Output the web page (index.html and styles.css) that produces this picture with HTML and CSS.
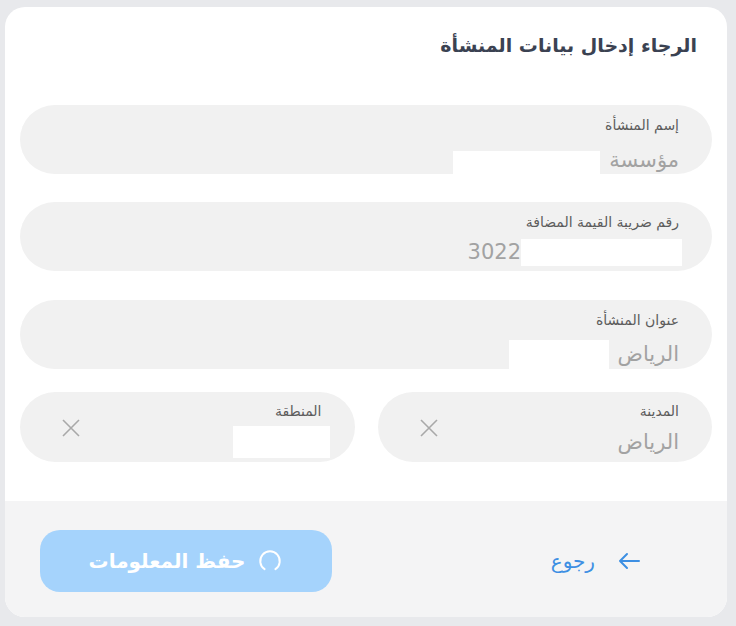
FILE: index.html
```html
<!DOCTYPE html>
<html lang="ar" dir="rtl">
<head>
    <meta charset="UTF-8">
    <meta name="viewport" content="width=device-width, initial-scale=1.0">
    <title>بيانات المنشأة</title>
    <link rel="stylesheet" href="styles.css">
</head>
<body>
    <div class="card">
        <div class="card-body">
            <h1 class="title">الرجاء إدخال بيانات المنشأة</h1>
            <div class="fields">
                <div class="field">
                    <label class="label">إسم المنشأة</label>
                    <div class="value">مؤسسة <span class="mask mask-name"></span></div>
                </div>
                <div class="field">
                    <label class="label">رقم ضريبة القيمة المضافة</label>
                    <div class="value value-ltr">3022<span class="mask mask-vat"></span></div>
                </div>
                <div class="field field-address">
                    <label class="label">عنوان المنشأة</label>
                    <div class="value">الرياض <span class="mask mask-address"></span></div>
                </div>
                <div class="row">
                    <div class="field field-select">
                        <div class="select-text">
                            <label class="label">المدينة</label>
                            <div class="value">الرياض</div>
                        </div>
                        <svg class="clear" width="20" height="20" viewBox="0 0 20 20"><path d="M2 2 L18 18 M18 2 L2 18" stroke="#a9a9a9" stroke-width="1.6" fill="none"/></svg>
                    </div>
                    <div class="field field-select">
                        <div class="select-text">
                            <label class="label">المنطقة</label>
                            <div class="value"><span class="mask mask-region"></span></div>
                        </div>
                        <svg class="clear" width="20" height="20" viewBox="0 0 20 20"><path d="M2 2 L18 18 M18 2 L2 18" stroke="#a9a9a9" stroke-width="1.6" fill="none"/></svg>
                    </div>
                </div>
            </div>
        </div>
        <div class="card-footer">
            <a class="back" href="#">
                <svg width="24" height="20" viewBox="0 0 24 20"><path d="M22 10 H3 M10 3 L3 10 L10 17" stroke="#3d8fe3" stroke-width="2" fill="none" stroke-linecap="round" stroke-linejoin="round"/></svg>
                <span>رجوع</span>
            </a>
            <button class="save" disabled>
                <svg class="spinner" width="26" height="26" viewBox="0 0 24 24"><path d="M7 19.5 A9 9 0 1 1 17 19.5" stroke="#fff" stroke-width="1.8" fill="none" stroke-linecap="round"/></svg>
                <span>حفظ المعلومات</span>
            </button>
        </div>
    </div>
</body>
</html>
```

FILE: styles.css
```css
body {
    margin: 0;
    background-color: #e8e9ec;
    font-family: "DejaVu Sans", sans-serif;
}
.card {
    width: 722px;
    height: 610px;
    margin: 7px auto 0 5px;
    background-color: white;
    border-radius: 20px;
    overflow: hidden;
    display: flex;
    flex-direction: column;
}
.card-body {
    flex: 1;
    padding: 26px 15px 0 15px;
}
.title {
    margin: 0 15px 48px 0;
    font-size: 19px;
    line-height: 24px;
    color: #3b4252;
    font-weight: bold;
}
.fields {
    display: flex;
    flex-direction: column;
    gap: 28px;
}
.field {
    height: 69px;
    box-sizing: border-box;
    background-color: #f1f1f1;
    border-radius: 35px;
    padding: 10px 33px 0 33px;
}
.field-address {
    margin-top: 1px;
}
.label {
    display: block;
    font-size: 14px;
    line-height: 20px;
    color: #5c5c5c;
}
.value {
    margin-top: 8px;
    font-size: 21px;
    line-height: 28px;
    color: #a2a2a2;
    display: flex;
    align-items: center;
    gap: 9px;
}
.value-ltr {
    direction: ltr;
    justify-content: flex-end;
    gap: 0;
    margin-top: 6px;
}
.mask {
    display: inline-block;
    background-color: white;
}
.mask-name {
    width: 147px;
    height: 26px;
    margin-top: 8px;
}
.mask-vat {
    width: 161px;
    height: 27px;
    margin-right: -3px;
}
.mask-address {
    width: 100px;
    height: 30px;
    margin-top: 2px;
}
.mask-region {
    width: 97px;
    height: 32px;
    margin-right: -8px;
    margin-top: -2px;
}
.row {
    display: flex;
    gap: 23px;
    margin-top: -5px;
}
.row .field {
    flex: 1;
    height: 70px;
    display: flex;
    align-items: flex-start;
    justify-content: space-between;
    padding: 9px 33px 0 41px;
}
.row .value {
    margin-top: 7px;
}
.clear {
    align-self: center;
    margin-top: -8px;
}
.card-footer {
    height: 116px;
    box-sizing: border-box;
    background-color: #f4f4f5;
    display: flex;
    align-items: center;
    justify-content: space-between;
    padding: 4px 86px 0 35px;
}
.back {
    display: flex;
    align-items: center;
    gap: 22px;
    color: #3d8fe3;
    text-decoration: none;
    font-size: 20px;
}
.save {
    width: 292px;
    height: 62px;
    border: none;
    border-radius: 20px;
    background-color: #a5d3fc;
    color: white;
    font-family: "DejaVu Sans", sans-serif;
    font-size: 20px;
    font-weight: bold;
    display: flex;
    align-items: center;
    justify-content: center;
    gap: 12px;
}
```
